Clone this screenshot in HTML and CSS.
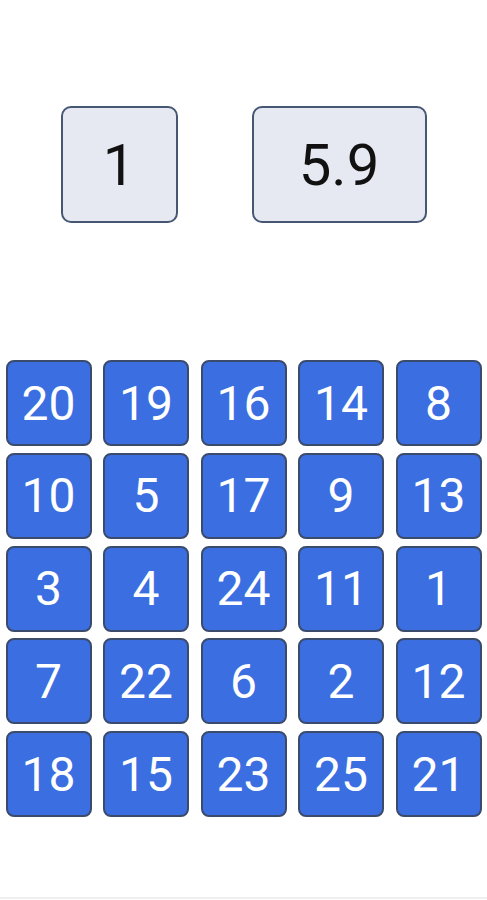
FILE: index.html
```html
<!DOCTYPE html>
<html>
<head>
<meta charset="utf-8">
<link rel="stylesheet" href="styles.css">
</head>
<body>
<div class="page">
  <div class="stats">
    <div class="stat stat-count">1</div>
    <div class="stat stat-time">5.9</div>
  </div>
  <div class="board">
    <div class="tile">20</div><div class="tile">19</div><div class="tile">16</div><div class="tile">14</div><div class="tile">8</div>
    <div class="tile">10</div><div class="tile">5</div><div class="tile">17</div><div class="tile">9</div><div class="tile">13</div>
    <div class="tile">3</div><div class="tile">4</div><div class="tile">24</div><div class="tile">11</div><div class="tile">1</div>
    <div class="tile">7</div><div class="tile">22</div><div class="tile">6</div><div class="tile">2</div><div class="tile">12</div>
    <div class="tile">18</div><div class="tile">15</div><div class="tile">23</div><div class="tile">25</div><div class="tile">21</div>
  </div>
  <div class="bottom-line"></div>
</div>
</body>
</html>
```
FILE: styles.css
```css
html, body {
  margin: 0;
  padding: 0;
  background: #ffffff;
  font-family: Roboto, "Noto Sans", sans-serif;
}
.page {
  width: 487px;
  height: 900px;
  display: flex;
  flex-direction: column;
  position: relative;
}
.stats {
  display: flex;
  justify-content: center;
  gap: 74px;
  padding-top: 106px;
}
.stat {
  box-sizing: border-box;
  height: 117px;
  background: #e6e9f1;
  border: 2px solid #465773;
  border-radius: 10px;
  display: flex;
  align-items: center;
  justify-content: center;
  font-size: 58px;
  color: #111111;
}
.stat-count { width: 117px; }
.stat-time { width: 175px; }
.board {
  margin-top: 137px;
  display: grid;
  grid-template-columns: repeat(5, 86px);
  grid-auto-rows: 86px;
  column-gap: 11.5px;
  row-gap: 6.8px;
  justify-content: center;
}
.tile {
  box-sizing: border-box;
  background: #3a6ee1;
  border: 2px solid #3b4b6b;
  border-radius: 8px;
  color: #ffffff;
  font-size: 48px;
  display: flex;
  align-items: center;
  justify-content: center;
}
.bottom-line {
  margin-top: auto;
  height: 2px;
  background: #efefef;
  margin-bottom: 1px;
}
```
